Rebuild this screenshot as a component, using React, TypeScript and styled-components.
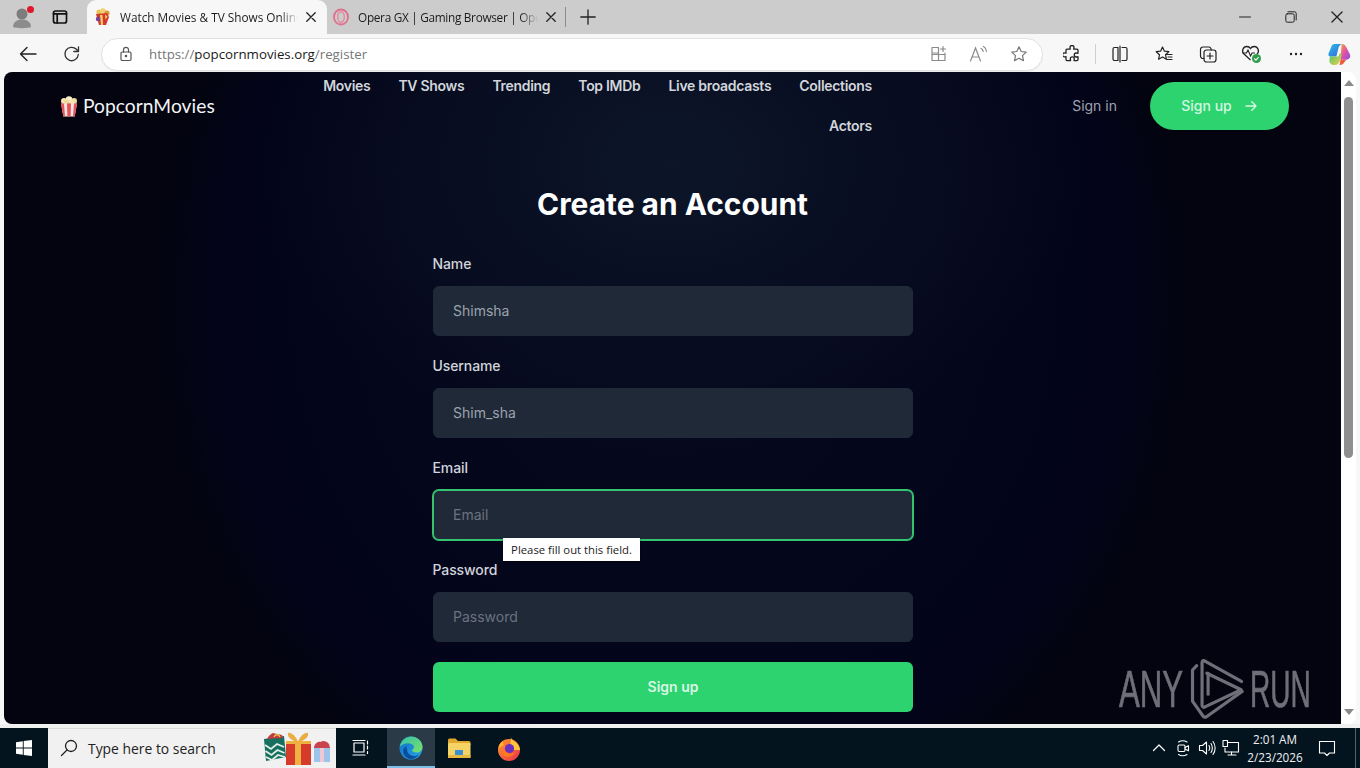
import React from "react";
import styled, { createGlobalStyle } from "styled-components";

const Global = createGlobalStyle`
  html, body { margin: 0; padding: 0; height: 100%; overflow: hidden; background: #f7f7f7; }
  * { box-sizing: border-box; }
  input::placeholder { color: #6b7280; opacity: 1; }
`;

const Shell = styled.div`
  width: 1360px; height: 768px; display: flex; flex-direction: column; overflow: hidden;
  font-family: "Open Sans", "Noto Sans", sans-serif;
`;

/* ---------- Tab strip ---------- */
const TabStrip = styled.div`
  height: 34px; flex: none; background: #cccccc; display: flex; align-items: stretch; color: #1a1a1a;
`;
const StripButton = styled.div<{ $w: number; $after?: number }>`
  width: ${p => p.$w}px; margin-right: ${p => p.$after ?? 0}px; flex: none; display: flex; align-items: center;
  justify-content: center; position: relative;
`;
const Tab = styled.div<{ $active?: boolean }>`
  flex: none; width: ${p => (p.$active ? 240 : 238)}px; display: flex; align-items: center;
  padding: 0 ${p => (p.$active ? 11 : 9)}px 0 ${p => (p.$active ? 7 : 6)}px;
  background: ${p => (p.$active ? "#f7f7f7" : "transparent")};
  border-radius: 9px 9px 0 0;
`;
const TabTitle = styled.span<{ $spacing?: number }>`
  flex: 1; min-width: 0; margin: 0 8px 0 9px; white-space: nowrap; overflow: hidden; font-size: 11.8px; color: #1c1c1c;
  letter-spacing: ${p => p.$spacing ?? 0}px;
  -webkit-mask-image: linear-gradient(to right, #000 90%, transparent 100%);
  mask-image: linear-gradient(to right, #000 90%, transparent 100%);
`;
const StripDivider = styled.div`
  width: 1px; height: 20px; background: #8b8b8b; align-self: center; flex: none;
`;
const WindowControls = styled.div`
  margin-left: auto; display: flex; align-items: center;
`;
const WindowButton = styled.div`
  width: 46px; display: flex; align-items: center; justify-content: center; height: 34px;
`;
const NotifyDot = styled.span`
  position: absolute; top: 6px; left: 27px; width: 7px; height: 7px; border-radius: 50%; background: #e0162b;
`;

/* ---------- Address toolbar ---------- */
const Toolbar = styled.div`
  height: 38px; flex: none; background: #f7f7f7; display: flex; align-items: center; padding: 2px 0 0 6px;
`;
const ToolSlot = styled.div<{ $w?: number }>`
  width: ${p => p.$w ?? 44}px; height: 32px; flex: none; display: flex; align-items: center; justify-content: center;
`;
const AddressBar = styled.div`
  flex: 1; min-width: 0; height: 33px; margin: 0 7px; background: #ffffff; border: 1px solid #e2e2e2;
  border-radius: 17px; display: flex; align-items: center; padding-left: 16px; padding-right: 3px;
  box-shadow: 0 1px 1px rgba(0,0,0,.05);
`;
const Url = styled.div`
  flex: 1; margin-left: 15px; font-size: 13.3px; color: #767676; white-space: nowrap;
`;
const UrlHost = styled.span`
  color: #1a1a1a;
`;
const AddressIcon = styled.div`
  width: 40px; display: flex; justify-content: center; align-items: center;
`;
const ToolSep = styled.div`
  width: 1px; height: 20px; margin: 0 2px 0 1px; background: #d0d0d0; flex: none;
`;

/* ---------- Viewport ---------- */
const Viewport = styled.div`
  height: 652px; flex: none; display: flex; background: #f7f7f7; padding-left: 4px; padding-right: 4px;
`;
const Page = styled.main`
  flex: 1; min-width: 0; position: relative; overflow: hidden; border-radius: 8px 0 0 8px;
  background:
    radial-gradient(ellipse 420px 300px at 668px 90px, #0d1629 0%, #090f22 40%, rgba(5,7,24,0) 100%),
    radial-gradient(ellipse 520px 560px at 668px 230px, #060a1e 0%, #03041a 85%, rgba(3,3,20,0) 100%),
    #03040f;
  font-family: Inter, "Liberation Sans", sans-serif;
`;
const ScrollTrack = styled.div`
  width: 15px; flex: none; background: #ffffff; display: flex; flex-direction: column; align-items: center;
  border-radius: 0 8px 8px 0; padding: 8px 0 8px;
`;
const ScrollUp = styled.div`
  width: 0; height: 0; border-left: 5px solid transparent; border-right: 5px solid transparent;
  border-bottom: 6px solid #8a8a8a; flex: none;
`;
const ScrollThumb = styled.div`
  width: 9px; height: 361px; margin-top: 11px; border-radius: 5px; background: #8f8f8f; flex: none;
`;
const ScrollDown = styled.div`
  width: 0; height: 0; margin-top: auto; margin-bottom: 1px; border-left: 5px solid transparent;
  border-right: 5px solid transparent; border-top: 6px solid #8a8a8a; flex: none;
`;

const Header = styled.header`
  height: 68px; display: flex; align-items: center; padding: 0 52px 0 56px;
`;
const Logo = styled.div`
  width: 252px; flex: none; display: flex; align-items: center; gap: 5px; height: 24px;
`;
const LogoText = styled.span`
  font-family: Lato, "Noto Sans", sans-serif; font-size: 19.2px; color: #f3f4f6; letter-spacing: 0.05px;
  line-height: 24px;
`;
const Nav = styled.nav`
  width: 560px; flex: none; display: flex; flex-wrap: wrap; justify-content: flex-end; column-gap: 28px;
`;
const NavLink = styled.a`
  height: 40px; padding-bottom: 2px; display: flex; align-items: center; font-size: 14px; font-weight: 600;
  letter-spacing: -0.3px; color: #d1d5db; white-space: nowrap;
`;
const Auth = styled.div`
  margin-left: auto; display: flex; align-items: center; gap: 33px;
`;
const SignIn = styled.a`
  font-size: 14px; color: #9ca3af; padding-bottom: 1px;
`;
const SignUpPill = styled.a`
  width: 139px; height: 48px; border-radius: 24px; background: #2dd36f; color: #d6f7e3; padding: 0 0 1px 0;
  display: flex; align-items: center; justify-content: center; gap: 12px; font-size: 14px; font-weight: 500;
`;

const Title = styled.h1`
  margin: 46px 0 0; font-size: 29.9px; line-height: 36px; font-weight: 700; color: #ffffff; text-align: center;
`;
const Form = styled.form`
  width: 480px; margin: 32px 0 0 429px; display: flex; flex-direction: column; gap: 20px;
`;
const Field = styled.div`
  display: flex; flex-direction: column; gap: 12px; position: relative;
`;
const Label = styled.label`
  font-size: 14px; line-height: 20px; font-weight: 500; color: #d1d5db; letter-spacing: -0.1px; margin-left: -0.5px;
`;
const Input = styled.input<{ $focus?: boolean }>`
  width: 480px; height: 50px; border-radius: 6px; background: #1f2937; color: #9ca3af;
  font-family: inherit; font-size: 14px; padding: 0 19px 2px; outline: none;
  border: 1px solid ${p => (p.$focus ? "#34c46f" : "#1f2937")};
  ${p => p.$focus && "box-shadow: 0 0 0 1px #34c46f;"}
`;
const SubmitButton = styled.button`
  width: 480px; height: 50px; border: none; border-radius: 6px; background: #2dd36f; color: #d9f8e6;
  font-family: inherit; font-size: 14px; font-weight: 600; padding: 0 0 2px;
`;
const ValidationTip = styled.div`
  position: absolute; left: 70px; top: 80px; height: 23px; width: 137px; background: #ffffff; padding-bottom: 1px;
  color: #1c1c1c; font-family: "Open Sans", "Noto Sans", sans-serif; font-size: 11.3px; display: flex;
  align-items: center; justify-content: center; box-shadow: 0 1px 2px rgba(0,0,0,.5); z-index: 2;
`;

const Watermark = styled.div`
  position: absolute; right: 30px; bottom: 2px; height: 66px; display: flex; align-items: center;
  color: #6f6f79; font-family: "Liberation Sans", sans-serif;
`;
const WatermarkWord = styled.span<{ $w: number; $scale: number }>`
  display: inline-block; width: ${p => p.$w}px; font-size: 52px; line-height: 66px; white-space: nowrap;
  transform: scaleX(${p => p.$scale}); transform-origin: left center; -webkit-text-stroke: 0.7px currentColor;
`;
const MarkBox = styled.div`
  width: 67px; flex: none; display: flex; justify-content: center; margin-top: -3px;
`;

/* ---------- Taskbar ---------- */
const Gap = styled.div`
  height: 4px; flex: none; background: #f0f0f0;
`;
const Taskbar = styled.footer`
  height: 40px; flex: none; background: #03141f; display: flex; align-items: stretch; color: #fff;
`;
const StartButton = styled.div`
  width: 48px; flex: none; display: flex; align-items: center; justify-content: center;
`;
const SearchBox = styled.div`
  width: 288px; flex: none; background: #f1f1f1; display: flex; align-items: center; padding: 0 0 1px 12px;
  position: relative; border-top: 1px solid #dcdcdc;
`;
const SearchText = styled.span`
  margin-left: 10px; color: #222; font-size: 13.9px; white-space: nowrap;
`;
const SearchArt = styled.div`
  position: absolute; right: 4px; top: 3px; display: flex;
`;
const TaskButton = styled.div<{ $active?: boolean; $w?: number; $nudge?: number }>`
  width: ${p => p.$w ?? 48}px; flex: none; display: flex; align-items: center; justify-content: center;
  padding-right: ${p => p.$nudge ?? 0}px;
  ${p => p.$active && "background: #2a3b47; box-shadow: inset 0 -2px 0 #7cc0e8;"}
`;
const Tray = styled.div`
  margin-left: auto; display: flex; align-items: center;
`;
const TrayIcon = styled.div<{ $w?: number }>`
  width: ${p => p.$w ?? 24}px; display: flex; align-items: center; justify-content: center;
`;
const Clock = styled.div`
  width: 64px; text-align: center; font-size: 11.7px; line-height: 18px; color: #f0f0f0;
`;
const ShowDesktop = styled.div`
  width: 1px; height: 40px; margin-left: 8px; margin-right: 4px; background: #54626c;
`;

/* ---------- Icons ---------- */
type IP = { size?: number; color?: string; w?: number };
const Line = ({ size = 16, color = "#222", w = 1.2, children, box = 16 }: IP & { children: React.ReactNode; box?: number }) => (
  <svg width={size} height={size} viewBox={`0 0 ${box} ${box}`} fill="none" stroke={color} strokeWidth={w} strokeLinecap="round" strokeLinejoin="round">{children}</svg>
);

const Profile = () => (
  <svg width="22" height="24" viewBox="0 0 22 24">
    <circle cx="11" cy="9" r="5.5" fill="#7d7d7d" />
    <path d="M2 22c0-5 4-7.5 9-7.5s9 2.5 9 7.5c-3 1.5-15 1.5-18 0z" fill="#8c8c8c" />
  </svg>
);
const TabsIcon = () => (
  <Line size={16} color="#111"><rect x="1.5" y="2" width="13" height="12" rx="2" strokeWidth="1.7" /><path d="M1.5 4.8h13M5.2 4.800V14" strokeWidth="1.7" /></Line>
);
const Close = ({ size = 10, color = "#222", w = 1.3 }: IP) => (
  <Line size={size} box={10} color={color} w={w}><path d="M.8.8l8.4 8.4M9.2.8L.8 9.2" /></Line>
);
const PopcornFav = () => (
  <svg width="17" height="18" viewBox="0 0 17 18">
    <circle cx="5" cy="4" r="2.6" fill="#e8c35a" /><circle cx="9" cy="3" r="2.8" fill="#f2d070" /><circle cx="13" cy="5" r="2.6" fill="#d99a3a" />
    <path d="M2 6l11-1 2 4-3 8H5z" fill="#d33a2c" />
    <path d="M6 7l1 10h2L8.500 7zM11 6.500l.5 5 2-3z" fill="#f3d36a" />
    <circle cx="4" cy="11" r="2.200" fill="#7a3e9d" />
  </svg>
);
const OperaFav = () => (
  <svg width="16" height="18" viewBox="0 0 16 18" fill="none">
    <ellipse cx="8" cy="9" rx="7" ry="7.500" stroke="#e0708c" strokeWidth="1.800" />
    <ellipse cx="8" cy="9" rx="3.300" ry="5.300" stroke="#e58aa2" strokeWidth="1.500" />
  </svg>
);
const LockIcon = () => (
  <Line size={16} color="#555"><rect x="3" y="6" width="10" height="8.500" rx="1.200" /><path d="M5.500 6V3.800a2.500 2.500 0 0 1 5 0V6" /><circle cx="8" cy="10" r=".7" fill="#555" /></Line>
);
const Back = () => (
  <Line size={18} box={18} color="#222" w={1.4}><path d="M17 9H1.500M8 2.500L1.500 9 8 15.500" /></Line>
);
const Reload = () => (
  <Line size={18} box={18} color="#333" w={1.3}><path d="M15.300 9.500a6.700 6.700 0 1 1-1.900-5.200L15.500 6.500M15.500 1.800v4.700h-4.700" /></Line>
);
const AddTabs = () => (
  <Line size={18} box={18} color="#8a8a8a"><path d="M2 8h6.500M8.500 2.500H2V15.500h13V9.500H2M8.500 2.500v13M15 8V9.500" /><path d="M13 1.500v5M10.500 4h5" /></Line>
);
const ReadAloud = () => (
  <svg width="20" height="18" viewBox="0 0 20 18" fill="none" stroke="#8a8a8a" strokeWidth="1.200" strokeLinecap="round">
    <path d="M1.500 16L6.500 3l5 13M3.200 12h6.600" /><path d="M12 3.500c1.300.6 2 1.800 2.200 3M14.500 1.500c1.700 1 2.800 2.800 3 4.800" />
  </svg>
);
const StarIcon = ({ color = "#777" }: { color?: string }) => (
  <Line size={18} box={18} color={color}><path d="M9 1.800l2.200 4.700 5 .6-3.700 3.500 1 5.100L9 13.200l-4.500 2.500 1-5.100-3.700-3.500 5-.6z" /></Line>
);
const Puzzle = () => (
  <Line size={18} box={18} color="#222" w={1.300}><path d="M7 2.500a2 2 0 0 1 4 0c0 .8-.3 1.200-.3 1.700h3.300a1 1 0 0 1 1 1v3.100c-.5 0-.9-.3-1.700-.3a2 2 0 0 0 0 4c.8 0 1.200-.3 1.700-.3v2.900a1 1 0 0 1-1 1h-3c0-.5.3-1 .3-1.700a2 2 0 0 0-4 0c0 .7.300 1.200.300 1.700H4a1 1 0 0 1-1-1v-3c-.5 0-1 .3-1.500.3a2 2 0 0 1 0-4c.5 0 1 .3 1.500.3V5.200a1 1 0 0 1 1-1h3.200c0-.5-.2-.9-.2-1.700z" /></Line>
);
const Split = () => (
  <Line size={18} box={18} color="#222" w={1.200}><path d="M7 2.500H3.500a1.500 1.500 0 0 0-1.500 1.500v10a1.500 1.500 0 0 0 1.500 1.500H7zM11 2.500h3.500A1.500 1.500 0 0 1 16 4v10a1.500 1.500 0 0 1-1.500 1.500H11M9 1v16" /></Line>
);
const Favorites = () => (
  <Line size={18} box={18} color="#222" w={1.200}><path d="M7.500 2l1.900 4.200 4.400.5-3.300 3 .9 4.500-3.900-2.300-3.900 2.300.9-4.500-3.300-3 4.400-.5zM12 9.500h5M13 12h4M12 14.500h5" /></Line>
);
const Collections = () => (
  <Line size={20} box={20} color="#222" w={1.200}><rect x="6" y="6" width="12" height="12" rx="2.500" /><path d="M12 9v6M9 12h6M6 14.500H5a2.500 2.500 0 0 1-2.500-2.500V5.500A2.500 2.500 0 0 1 5 3h6c1.200 0 2 .8 2.300 3" /></Line>
);
const Health = () => (
  <svg width="22" height="20" viewBox="0 0 22 20" fill="none">
    <path d="M9.500 16L3 10c-3-3-.8-7.500 2.800-7.500 1.700 0 3 .8 3.700 2 .7-1.200 2-2 3.700-2 3.600 0 5.800 4.500 2.800 7.500" stroke="#222" strokeWidth="1.300" />
    <path d="M1.500 9h4l1.500-3 2.500 6 1.500-3h3" stroke="#222" strokeWidth="1.100" />
    <circle cx="15.500" cy="14.500" r="4.500" fill="#2e9e4a" />
    <path d="M13.300 14.500l1.600 1.600 2.700-2.900" stroke="#fff" strokeWidth="1.100" />
  </svg>
);
const Dots = () => (
  <svg width="14" height="4" viewBox="0 0 14 4"><circle cx="2" cy="2" r="1.200" fill="#222" /><circle cx="7" cy="2" r="1.200" fill="#222" /><circle cx="12" cy="2" r="1.200" fill="#222" /></svg>
);
const Copilot = () => (
  <svg width="23" height="23" viewBox="0 0 22 22">
    <defs>
      <linearGradient id="cpA" x1="0" y1="0" x2="1" y2="1"><stop offset="0" stopColor="#27c0e8" /><stop offset="1" stopColor="#3a62d8" /></linearGradient>
      <linearGradient id="cpB" x1="0" y1="0" x2="1" y2="1"><stop offset="0" stopColor="#f3a63a" /><stop offset=".5" stopColor="#e04fa8" /><stop offset="1" stopColor="#8a4fe0" /></linearGradient>
      <linearGradient id="cpC" x1="0" y1="0" x2="1" y2="1"><stop offset="0" stopColor="#4cc66c" /><stop offset="1" stopColor="#f2d04a" /></linearGradient>
    </defs>
    <path d="M13 1c3 0 4 2 5 4l3 6c1 3-1 5-4 5h-5z" fill="url(#cpB)" />
    <path d="M6 1h7c-2 1-3 3-3.500 6L8 13H2.500C1 13 0 12 .5 10L3 4C3.500 2 5 1 6 1z" fill="url(#cpA)" />
    <path d="M2 13h8l1-3h2c0 4-1 6-2 8-1 2-2 3-4 3H5c-3 0-4.500-3-3-8z" fill="url(#cpC)" />
    <path d="M11 21c3 0 4-1 5-3l1.500-2H12c-.3 2-.6 3.500-1 5z" fill="#ef5a3c" />
  </svg>
);
const Minus = () => <Line size={12} box={12} w={1}><path d="M.5 6h11" /></Line>;
const Restore = () => (
  <Line size={12} box={12} w={1}><rect x=".8" y="2.800" width="8.400" height="8.400" rx="1.500" /><path d="M3 .8h6.500a1.700 1.700 0 0 1 1.700 1.700V9" /></Line>
);
const PlusIcon = () => <Line size={16} color="#222" w={1.300}><path d="M8 .8v14.400M.8 8h14.400" /></Line>;

const PopcornLogo = () => (
  <svg width="18" height="21" viewBox="0 0 18 21">
    <circle cx="4" cy="5" r="3" fill="#f7e6b4" /><circle cx="9" cy="3.500" r="3.300" fill="#fbeec8" /><circle cx="14" cy="5" r="3" fill="#f4dca0" /><circle cx="6.500" cy="6" r="2.500" fill="#efd793" /><circle cx="11.500" cy="6" r="2.500" fill="#f7e6b4" />
    <path d="M1 7.500h16L14.700 20.500H3.300z" fill="#f6e4e0" />
    <path d="M1 7.500h3l1 13H3.300zM7 7.500h4l-.4 13H7.400zM14 7.500h3l-2.300 13H13z" fill="#e4525a" />
  </svg>
);
const ArrowRight = () => (
  <Line size={14} box={14} color="#d6f7e3" w={1.400}><path d="M2 7h10M7.800 2.800L12 7l-4.200 4.200" /></Line>
);
const AnyRunMark = () => (
  <svg width="56" height="62" viewBox="25 15 170 195" fill="none" stroke="currentColor" strokeWidth="10" strokeLinejoin="round" strokeLinecap="round">
    <path d="M46 42L33 56v98l34 48c3 3 6 3 10 1l112-80" />
    <path d="M72 28c-5-3-9-1-9 4v134c0 6 5 9 9 6l114-54-108-52" />
    <path d="M72 28l115 64" />
    <path d="M82 66v66" />
  </svg>
);

const WinLogo = () => (
  <svg width="16" height="16" viewBox="0 0 16 16" fill="#fff"><path d="M0 2.200l6.800-1V7.500H0zM7.700 1L16 0v7.500H7.700zM0 8.400h6.800v6.400L0 13.800zM7.700 8.400H16V16l-8.300-1.100z" /></svg>
);
const SearchGlass = () => (
  <Line size={18} box={18} color="#222" w={1.300}><circle cx="11" cy="7" r="5.500" /><path d="M7 11l-5.500 5.500" /></Line>
);
const Gifts = () => (
  <svg width="68" height="34" viewBox="0 0 68 34">
    <path d="M0 7l20-3 2 21-20 4z" fill="#17705f" />
    <path d="M1 13l6 4 6-5 7 3M1.500 19l6 4 6-5 7 3M2 25l6 3 6-5 7 2" stroke="#e4efe8" strokeWidth="1.800" fill="none" />
    <path d="M3 7c2-4 4-5 6-6 2 1 6 1 9 2l1 3z" fill="#c23a42" />
    <path d="M10 5c1-3 5-3 6 0" stroke="#e8c14a" strokeWidth="1.400" fill="none" />
    <rect x="22" y="9" width="25" height="24" fill="#d63a2b" />
    <rect x="31" y="9" width="6" height="24" fill="#efb240" />
    <rect x="22" y="9" width="25" height="3" fill="#efb240" />
    <path d="M34 10c-5-1-11-4-10-9 3-1 8 3 10 9 2-6 7-10 10-9 1 5-5 8-10 9z" fill="#e9ad42" />
    <rect x="50" y="15" width="16" height="15" fill="#9ec3ea" />
    <rect x="56" y="15" width="4" height="15" fill="#f0c8d4" />
    <path d="M50 16c0-4 4-7 7-6 1-2 6-1 8 2l1 4z" fill="#c9424c" />
  </svg>
);
const TaskView = () => (
  <Line size={18} box={18} color="#fff" w={1.200}><rect x="2" y="4" width="10" height="9" /><path d="M1 1.500h12M1 16h12" /><path d="M15.500 2v3M15.500 7v3M15.500 12.500v2" /></Line>
);
const Edge = () => (
  <svg width="24" height="24" viewBox="0 0 24 24">
    <defs>
      <linearGradient id="edA" x1="0" y1="0" x2="1" y2="1"><stop offset="0" stopColor="#35c1a8" /><stop offset="1" stopColor="#7ce06a" /></linearGradient>
      <linearGradient id="edB" x1="0" y1="0" x2="1" y2="1"><stop offset="0" stopColor="#0f6fc4" /><stop offset="1" stopColor="#2aa6e8" /></linearGradient>
    </defs>
    <circle cx="12" cy="12" r="11.500" fill="url(#edB)" />
    <path d="M.8 11C2 4 7 .5 12 .5c6 0 11.500 4.500 11.500 10.500 0 3.500-3 5.500-6 5.500-2.500 0-4.500-1-4.500-2.500 2-1 2.500-3 1.500-4.500C12.500 7 8 6.500 5 8c-2 1-3.500 2-4.200 3z" fill="url(#edA)" />
    <path d="M8 13c0 4 3 7 7 7 2 0 3.500-.5 5-2-2 4-6 5.500-9 5-5-1-8-6-6.500-10 .7-1.500 2-2.500 3.500-3-.5 1-.5 2-.5 3z" fill="#0a4f9e" />
  </svg>
);
const Folder = () => (
  <svg width="24" height="22" viewBox="0 0 24 22">
    <path d="M1 3a1.500 1.500 0 0 1 1.500-1.500h6L11 4h11a1.500 1.500 0 0 1 1.500 1.500V8H1z" fill="#e0a92f" />
    <rect x="1" y="6" width="22.500" height="15" rx="1.200" fill="#f6d365" />
    <rect x="8" y="13" width="8" height="5" fill="#3c8fd0" />
    <rect x="1" y="18" width="22.500" height="3" fill="#e8b93f" />
  </svg>
);
const Firefox = () => (
  <svg width="24" height="25" viewBox="0 0 24 25">
    <defs>
      <linearGradient id="ffA" x1="0" y1="0" x2="1" y2="1"><stop offset="0" stopColor="#ff9a2e" /><stop offset="1" stopColor="#e92f4a" /></linearGradient>
    </defs>
    <circle cx="12" cy="14" r="11" fill="url(#ffA)" />
    <path d="M14 0c-.5 4 3 4.500 5.500 7 2.500 2.500 3.500 5 3.500 7H13z" fill="#ffc83a" />
    <path d="M1.500 12C2 8 4 6 6 5c-.5 2 0 3 1 4z" fill="#ffb12e" />
    <circle cx="12.500" cy="12.500" r="4.600" fill="#6b2fc0" />
    <path d="M6.500 12c1 5 7 7.500 11.500 4-2 6-10.500 6-12.500 1.500z" fill="#ff7a1f" />
  </svg>
);
const Chevron = () => <Line size={14} box={14} color="#fff" w={1.200}><path d="M1.500 9.500L7 4l5.500 5.500" /></Line>;
const Meet = () => (
  <Line size={18} box={18} color="#fff" w={1.100}><rect x="4" y="6" width="7" height="6.500" rx="1.200" /><path d="M11 8.500l3.500-1.800v5.100L11 10M4.500 3c2.500-1.500 6-1.500 8.500 0M4.500 15.500c2.500 1.500 6 1.500 8.500 0" /></Line>
);
const Speaker = () => (
  <Line size={18} box={18} color="#fff" w={1.100}><path d="M1.500 6.500h3L8.500 3v12l-4-3.500h-3zM11 6.500c1 1.500 1 3.500 0 5M13 4.500c1.800 2.500 1.800 6.500 0 9M15 2.500c2.800 3.500 2.800 9.500 0 13" /></Line>
);
const Network = () => (
  <Line size={18} box={18} color="#fff" w={1.100}><path d="M5.500 3.500h11v9.500H3V9" /><path d="M9.500 13v3M6 16h8" /><rect x="1" y="1.500" width="4.500" height="6" /></Line>
);
const Notify = () => (
  <Line size={18} box={18} color="#fff" w={1.100}><path d="M1.500 2.500h15v11.500h-5L9 16.500 6.500 14h-5z" /></Line>
);

const NAV = ["Movies", "TV Shows", "Trending", "Top IMDb", "Live broadcasts", "Collections", "Actors"];

export default function App() {
  return (
    <Shell>
      <Global />
      <TabStrip>
        <StripButton $w={44}><Profile /><NotifyDot /></StripButton>
        <StripButton $w={32} $after={11}><TabsIcon /></StripButton>
        <Tab $active>
          <PopcornFav />
          <TabTitle>Watch Movies &amp; TV Shows Online Free</TabTitle>
          <Close />
        </Tab>
        <Tab>
          <OperaFav />
          <TabTitle $spacing={-0.3}>Opera GX | Gaming Browser | Opera Official</TabTitle>
          <Close />
        </Tab>
        <StripDivider />
        <StripButton $w={44}><PlusIcon /></StripButton>
        <WindowControls>
          <WindowButton><Minus /></WindowButton>
          <WindowButton><Restore /></WindowButton>
          <WindowButton><Close size={12} w={1.1} /></WindowButton>
        </WindowControls>
      </TabStrip>

      <Toolbar>
        <ToolSlot><Back /></ToolSlot>
        <ToolSlot><Reload /></ToolSlot>
        <AddressBar>
          <LockIcon />
          <Url>https://<UrlHost>popcornmovies.org</UrlHost>/register</Url>
          <AddressIcon><AddTabs /></AddressIcon>
          <AddressIcon><ReadAloud /></AddressIcon>
          <AddressIcon><StarIcon /></AddressIcon>
        </AddressBar>
        <ToolSlot><Puzzle /></ToolSlot>
        <ToolSep />
        <ToolSlot><Split /></ToolSlot>
        <ToolSlot><Favorites /></ToolSlot>
        <ToolSlot><Collections /></ToolSlot>
        <ToolSlot><Health /></ToolSlot>
        <ToolSlot><Dots /></ToolSlot>
        <ToolSlot $w={42}><Copilot /></ToolSlot>
      </Toolbar>

      <Viewport>
        <Page>
          <Header>
            <Logo><PopcornLogo /><LogoText>PopcornMovies</LogoText></Logo>
            <Nav>{NAV.map(n => <NavLink key={n}>{n}</NavLink>)}</Nav>
            <Auth>
              <SignIn>Sign in</SignIn>
              <SignUpPill>Sign up <ArrowRight /></SignUpPill>
            </Auth>
          </Header>
          <Title>Create an Account</Title>
          <Form>
            <Field><Label>Name</Label><Input defaultValue="Shimsha" /></Field>
            <Field><Label>Username</Label><Input defaultValue="Shim_sha" /></Field>
            <Field>
              <Label>Email</Label>
              <Input $focus placeholder="Email" />
              <ValidationTip>Please fill out this field.</ValidationTip>
            </Field>
            <Field><Label>Password</Label><Input placeholder="Password" /></Field>
            <SubmitButton type="button">Sign up</SubmitButton>
          </Form>
          <Watermark>
            <WatermarkWord $w={64} $scale={0.6}>ANY</WatermarkWord>
            <MarkBox><AnyRunMark /></MarkBox>
            <WatermarkWord $w={61} $scale={0.54}>RUN</WatermarkWord>
          </Watermark>
        </Page>
        <ScrollTrack><ScrollUp /><ScrollThumb /><ScrollDown /></ScrollTrack>
      </Viewport>
      <Gap />

      <Taskbar>
        <StartButton><WinLogo /></StartButton>
        <SearchBox>
          <SearchGlass />
          <SearchText>Type here to search</SearchText>
          <SearchArt><Gifts /></SearchArt>
        </SearchBox>
        <TaskButton $w={51} $nudge={2}><TaskView /></TaskButton>
        <TaskButton $active><Edge /></TaskButton>
        <TaskButton><Folder /></TaskButton>
        <TaskButton $w={52}><Firefox /></TaskButton>
        <Tray>
          <TrayIcon><Chevron /></TrayIcon>
          <TrayIcon><Meet /></TrayIcon>
          <TrayIcon><Speaker /></TrayIcon>
          <TrayIcon><Network /></TrayIcon>
          <Clock>2:01 AM<br />2/23/2026</Clock>
          <TrayIcon $w={40}><Notify /></TrayIcon>
          <ShowDesktop />
        </Tray>
      </Taskbar>
    </Shell>
  );
}
